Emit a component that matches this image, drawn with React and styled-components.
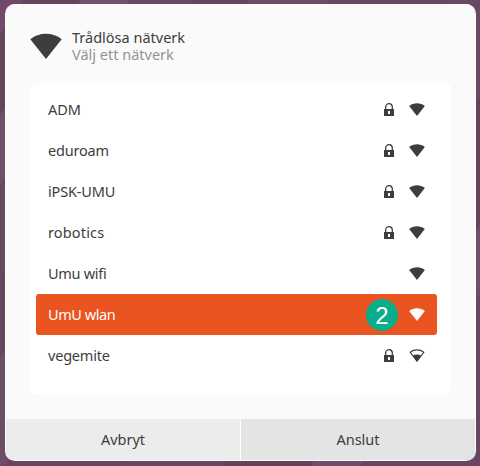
import React from 'react'
import styled, { createGlobalStyle } from 'styled-components'

const GlobalStyle = createGlobalStyle`
    * {
        box-sizing: border-box;
    }

    body {
        margin: 0;
        font-family: "Noto Sans", "Open Sans", sans-serif;
        font-size: 14.5px;
        color: #3d3d3d;
    }
`
const Desktop = styled.div`
    width: 480px;
    height: 466px;
    padding: 4px 4px 5px 5px;
    overflow: hidden;
    background:
        linear-gradient(125deg, #71496a 0 3%, #65445c 3% 10%, #70506a 10% 16%, #6b4862 16% 24%, #654660 24% 31%, #6f4c66 31% 41%, #684660 41% 56%, #694961 56% 68%, #624357 68% 79%, #704d69 79% 85%, #694660 85%);
`
const Dialog = styled.section`
    display: flex;
    flex-direction: column;
    height: 457px;
    padding: 0 1px 1px;
    border-radius: 10px;
    overflow: hidden;
    background-color: #ffffff;
`
const Content = styled.div`
    display: flex;
    flex-direction: column;
    height: 415px;
    padding: 24px;
    background-color: #fafafa;
`
const Header = styled.header`
    display: flex;
    height: 55px;
    gap: 10px;

    > svg {
        margin-top: 5px;
    }
`
const Title = styled.h1`
    margin: 0;
    font-size: 14.5px;
    font-weight: 400;
    line-height: 18px;
    white-space: nowrap;
`
const Subtitle = styled.p`
    margin: 0;
    line-height: 17px;
    white-space: nowrap;
    color: #929494;
`
const NetworkList = styled.ul`
    height: 312px;
    width: 421px;
    margin: 0;
    padding: 6px 14px 0 6px;
    list-style: none;
    border-radius: 6px;
    background-color: #ffffff;
`
const NetworkRow = styled.li`
    display: flex;
    align-items: center;
    height: 41px;
    padding: 0 12px;
    border-radius: 3px;
    color: ${({ $selected }) => ($selected ? '#ffffff' : '#3d3d3d')};
    background-color: ${({ $selected }) => ($selected ? '#e95420' : 'transparent')};
`
const NetworkName = styled.span`
    flex: 1;
    padding-bottom: 2px;
    white-space: nowrap;
    letter-spacing: ${({ $track }) => $track || 0}px;
`
const RowIcons = styled.span`
    display: flex;
    align-items: center;
    gap: ${({ $badge }) => ($badge ? 11 : 15)}px;
`
const StepBadge = styled.span`
    display: flex;
    align-items: center;
    justify-content: center;
    width: 32px;
    height: 32px;
    margin-top: 1px;
    padding-top: 1px;
    border-radius: 50%;
    font-family: "Liberation Sans", Arial, sans-serif;
    font-size: 24px;
    line-height: 32px;
    color: #ffffff;
    background-color: #08ad8c;
`
const Actions = styled.footer`
    display: flex;
    gap: 1px;
    height: 41px;
`
const ActionButton = styled.button`
    width: 234px;
    border: 0;
    padding: 0 0 1px;
    font: inherit;
    color: #3d3d3d;
    background-color: ${({ $primary }) => ($primary ? '#e4e4e4' : '#ececec')};
`

const WifiIcon = ({ width = 16, height = 13, weak }) => (
    <svg width={width} height={height} viewBox="0 0 32 26" fill="currentColor">
        {weak ?
            <>
                <path d="M2.4 6.5C10 .2 22 .2 29.6 6.5L16 24Z" fill="none" stroke="currentColor" strokeWidth="2.2" />
                <path d="M7.5 13.5C13 10.2 19 10.2 24.5 13.5L16 25.5Z" />
            </>
            :
            <path d="M.3 6.2C9-1.2 23-1.2 31.7 6.2L16 26Z" />
        }
    </svg>
)

const LockIcon = () => (
    <svg width="10" height="13" viewBox="0 0 10 13">
        <path d="M1.7 6.5V4a3.3 3.3 0 0 1 6.6 0v2.5" fill="none" stroke="#3d3d3d" strokeWidth="1.3" />
        <path d="M0 6h10v7H0zM4 8v3h2V8z" fill="#3d3d3d" fillRule="evenodd" />
    </svg>
)

const networks = [
    { name: 'ADM', locked: true },
    { name: 'eduroam', track: -0.2, locked: true },
    { name: 'iPSK-UMU', track: -0.15, locked: true },
    { name: 'robotics', track: 0.15, locked: true },
    { name: 'Umu wifi', track: -0.3 },
    { name: 'UmU wlan', track: -0.45, selected: true, step: 2 },
    { name: 'vegemite', track: -0.2, locked: true, weak: true },
]

const App = () => {
    return (
        <>
            <GlobalStyle />
            <Desktop>
                <Dialog>
                    <Content>
                        <Header>
                            <WifiIcon width={32} height={26} />
                            <div>
                                <Title>Trådlösa nätverk</Title>
                                <Subtitle>Välj ett nätverk</Subtitle>
                            </div>
                        </Header>
                        <NetworkList>
                            {networks.map(({ name, track, locked, weak, selected, step }) => (
                                <NetworkRow key={name} $selected={selected}>
                                    <NetworkName $track={track}>{name}</NetworkName>
                                    <RowIcons $badge={step}>
                                        {locked && <LockIcon />}
                                        {step && <StepBadge>{step}</StepBadge>}
                                        <WifiIcon weak={weak} />
                                    </RowIcons>
                                </NetworkRow>
                            ))}
                        </NetworkList>
                    </Content>
                    <Actions>
                        <ActionButton>Avbryt</ActionButton>
                        <ActionButton $primary>Anslut</ActionButton>
                    </Actions>
                </Dialog>
            </Desktop>
        </>
    )
}

export default App
